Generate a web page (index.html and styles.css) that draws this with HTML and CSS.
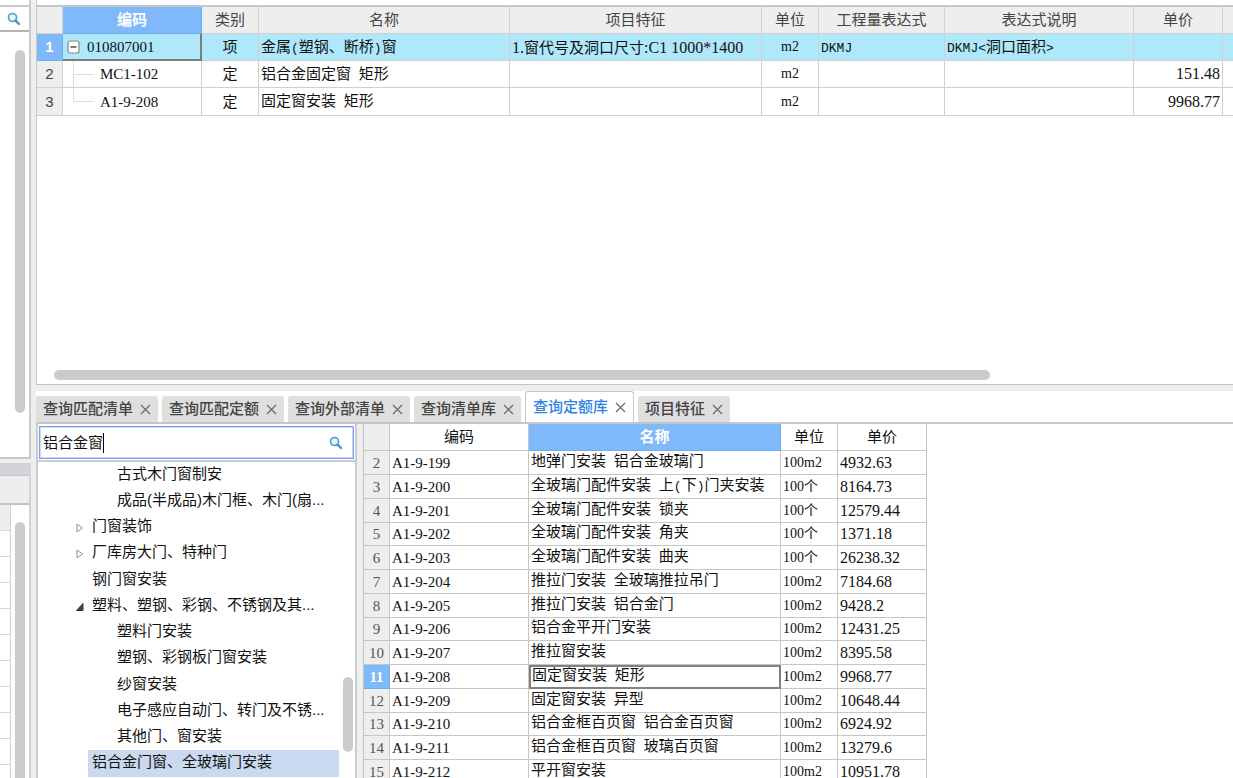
FILE: index.html
```html
<!DOCTYPE html>
<html lang="zh-CN">
<head>
<meta charset="utf-8">
<title>查询定额库</title>
<link rel="stylesheet" href="styles.css">
</head>
<body>
<div class="app">
  <aside class="side">
    <section class="side-top">
      <button class="side-search" aria-label="搜索">
        <svg width="14" height="14" viewBox="0 0 14 14"><circle cx="5.5" cy="5.5" r="4" fill="#eef7fd" stroke="#4a9ccb" stroke-width="1.6"/><path d="M8.6 8.6L12 12" stroke="#3f94c6" stroke-width="2.4" stroke-linecap="round"/></svg>
      </button>
      <div class="side-body"><span class="thumb thumb-side"></span></div>
    </section>
    <section class="side-bottom">
      <div class="side-title"></div>
      <div class="side-tools"></div>
      <div class="side-grid">
        <div class="side-cells"><i></i><i></i><i></i><i></i><i></i><i></i><i></i><i></i><i></i><i></i><i></i></div>
        <span class="thumb thumb-low"></span>
      </div>
    </section>
  </aside>

  <main class="main">
    <section class="bill">
      <table class="bill-table">
        <colgroup><col class="w-no"><col class="w-code"><col class="w-kind"><col class="w-name"><col class="w-feature"><col class="w-kind"><col class="w-expr"><col class="w-desc"><col class="w-price"><col></colgroup>
        <thead>
          <tr><th></th><th class="picked">编码</th><th>类别</th><th>名称</th><th>项目特征</th><th>单位</th><th>工程量表达式</th><th>表达式说明</th><th>单价</th><th></th></tr>
        </thead>
        <tbody>
          <tr class="current">
            <th class="picked">1</th>
            <td class="code cell-focus"><div class="node"><button class="toggle" aria-label="折叠"><svg width="13" height="14" viewBox="0 0 13 14"><rect x="1" y="1" width="11" height="12" rx="2" fill="#fff" stroke="#858585" stroke-width="1.2"/><path d="M3.5 7H9.500" stroke="#444" stroke-width="1.4"/></svg></button><span>010807001</span></div></td>
            <td class="mid">项</td>
            <td class="mix"><span>金属</span>(<span>塑钢、断桥</span>)<span>窗</span></td>
            <td class="feature"><b>1.</b>窗代号及洞口尺寸<b>:C1 1000*1400</b></td>
            <td class="unit mid">m2</td>
            <td class="mix">DKMJ</td>
            <td class="mix">DKMJ&lt;<span>洞口面积</span>&gt;</td>
            <td></td><td></td>
          </tr>
          <tr>
            <th>2</th>
            <td class="code"><div class="node"><svg class="branch" width="22" height="27" viewBox="0 0 22 27"><path d="M.5 0V27M.5 13.500H21" fill="none" stroke="#dcdcdc"/></svg><span>MC1-102</span></div></td>
            <td class="mid">定</td>
            <td class="mix"><span>铝合金固定窗</span> <span>矩形</span></td>
            <td></td><td class="unit mid">m2</td><td></td><td></td><td class="price right">151.48</td><td></td>
          </tr>
          <tr>
            <th>3</th>
            <td class="code"><div class="node"><svg class="branch" width="22" height="27" viewBox="0 0 22 27"><path d="M.5 0V13.500H21" fill="none" stroke="#dcdcdc"/></svg><span>A1-9-208</span></div></td>
            <td class="mid">定</td>
            <td class="mix"><span>固定窗安装</span> <span>矩形</span></td>
            <td></td><td class="unit mid">m2</td><td></td><td></td><td class="price right">9968.77</td><td></td>
          </tr>
        </tbody>
      </table>
      <span class="thumb thumb-wide"></span>
    </section>

    <section class="lookup">
      <nav class="tabs">
        <div class="tab"><button>查询匹配清单</button><button class="close" aria-label="关闭"><svg width="11" height="11" viewBox="0 0 11 11"><path d="M1 1L10 10M10 1L1 10"/></svg></button></div>
        <div class="tab"><button>查询匹配定额</button><button class="close" aria-label="关闭"><svg width="11" height="11" viewBox="0 0 11 11"><path d="M1 1L10 10M10 1L1 10"/></svg></button></div>
        <div class="tab"><button>查询外部清单</button><button class="close" aria-label="关闭"><svg width="11" height="11" viewBox="0 0 11 11"><path d="M1 1L10 10M10 1L1 10"/></svg></button></div>
        <div class="tab"><button>查询清单库</button><button class="close" aria-label="关闭"><svg width="11" height="11" viewBox="0 0 11 11"><path d="M1 1L10 10M10 1L1 10"/></svg></button></div>
        <div class="tab active"><button>查询定额库</button><button class="close" aria-label="关闭"><svg width="11" height="11" viewBox="0 0 11 11"><path d="M1 1L10 10M10 1L1 10"/></svg></button></div>
        <div class="tab"><button>项目特征</button><button class="close" aria-label="关闭"><svg width="11" height="11" viewBox="0 0 11 11"><path d="M1 1L10 10M10 1L1 10"/></svg></button></div>
      </nav>
      <div class="panes">
        <div class="finder">
          <div class="search">
            <input type="text" value="铝合金窗" aria-label="搜索定额">
            <span class="caret"></span>
            <svg width="14" height="14" viewBox="0 0 14 14"><circle cx="5.500" cy="5.500" r="4" fill="#eef7fd" stroke="#4a9ccb" stroke-width="1.6"/><path d="M8.600 8.600L12 12" stroke="#3f94c6" stroke-width="2.4" stroke-linecap="round"/></svg>
          </div>
          <div class="tree-box">
            <ul class="tree">
              <li class="deep">古式木门窗制安</li>
              <li class="deep">成品(半成品)木门框、木门(扇...</li>
              <li><svg width="8" height="10" viewBox="0 0 8 10"><path d="M1 1L6.500 5L1 9Z" fill="#fff" stroke="#909090"/></svg>门窗装饰</li>
              <li><svg width="8" height="10" viewBox="0 0 8 10"><path d="M1 1L6.500 5L1 9Z" fill="#fff" stroke="#909090"/></svg>厂库房大门、特种门</li>
              <li>钢门窗安装</li>
              <li><svg width="8" height="10" viewBox="0 0 8 10"><path d="M7 1.500V8.500H0.500Z" fill="#444" stroke="#333"/></svg>塑料、塑钢、彩钢、不锈钢及其...</li>
              <li class="deep">塑料门安装</li>
              <li class="deep">塑钢、彩钢板门窗安装</li>
              <li class="deep">纱窗安装</li>
              <li class="deep">电子感应自动门、转门及不锈...</li>
              <li class="deep">其他门、窗安装</li>
              <li class="chosen">铝合金门窗、全玻璃门安装</li>
            </ul>
            <span class="thumb thumb-tree"></span>
          </div>
        </div>
        <div class="results">
          <table class="quota">
            <colgroup><col class="w-no"><col class="w-code"><col class="w-title"><col class="w-kind"><col class="w-price"></colgroup>
            <thead><tr><th class="corner"></th><th>编码</th><th class="picked">名称</th><th>单位</th><th>单价</th></tr></thead>
            <tbody>
              <tr><th>2</th><td class="code">A1-9-199</td><td class="mix"><span>地弹门安装</span> <span>铝合金玻璃门</span></td><td class="unit">100m2</td><td class="price">4932.63</td></tr>
              <tr><th>3</th><td class="code">A1-9-200</td><td class="mix"><span>全玻璃门配件安装</span> <span>上</span>(<span>下</span>)<span>门夹安装</span></td><td class="unit">100个</td><td class="price">8164.73</td></tr>
              <tr><th>4</th><td class="code">A1-9-201</td><td class="mix"><span>全玻璃门配件安装</span> <span>锁夹</span></td><td class="unit">100个</td><td class="price">12579.44</td></tr>
              <tr><th>5</th><td class="code">A1-9-202</td><td class="mix"><span>全玻璃门配件安装</span> <span>角夹</span></td><td class="unit">100个</td><td class="price">1371.18</td></tr>
              <tr><th>6</th><td class="code">A1-9-203</td><td class="mix"><span>全玻璃门配件安装</span> <span>曲夹</span></td><td class="unit">100个</td><td class="price">26238.32</td></tr>
              <tr><th>7</th><td class="code">A1-9-204</td><td class="mix"><span>推拉门安装</span> <span>全玻璃推拉吊门</span></td><td class="unit">100m2</td><td class="price">7184.68</td></tr>
              <tr><th>8</th><td class="code">A1-9-205</td><td class="mix"><span>推拉门安装</span> <span>铝合金门</span></td><td class="unit">100m2</td><td class="price">9428.2</td></tr>
              <tr><th>9</th><td class="code">A1-9-206</td><td class="mix"><span>铝合金平开门安装</span></td><td class="unit">100m2</td><td class="price">12431.25</td></tr>
              <tr><th>10</th><td class="code">A1-9-207</td><td class="mix"><span>推拉窗安装</span></td><td class="unit">100m2</td><td class="price">8395.58</td></tr>
              <tr><th class="picked">11</th><td class="code">A1-9-208</td><td class="mix cell-box"><span>固定窗安装</span> <span>矩形</span></td><td class="unit">100m2</td><td class="price">9968.77</td></tr>
              <tr><th>12</th><td class="code">A1-9-209</td><td class="mix"><span>固定窗安装</span> <span>异型</span></td><td class="unit">100m2</td><td class="price">10648.44</td></tr>
              <tr><th>13</th><td class="code">A1-9-210</td><td class="mix"><span>铝合金框百页窗</span> <span>铝合金百页窗</span></td><td class="unit">100m2</td><td class="price">6924.92</td></tr>
              <tr><th>14</th><td class="code">A1-9-211</td><td class="mix"><span>铝合金框百页窗</span> <span>玻璃百页窗</span></td><td class="unit">100m2</td><td class="price">13279.6</td></tr>
              <tr><th>15</th><td class="code">A1-9-212</td><td class="mix"><span>平开窗安装</span></td><td class="unit">100m2</td><td class="price">10951.78</td></tr>
            </tbody>
          </table>
        </div>
      </div>
    </section>
  </main>
</div>
</body>
</html>
```
FILE: styles.css
```css
* { box-sizing: border-box; }

body {
  margin: 0;
  background: #eeeeee;
  color: #111;
  font: 15px/20px "Liberation Sans", "Noto Sans CJK SC", sans-serif;
}

button {
  margin: 0;
  padding: 0;
  border: 0;
  background: none;
  color: inherit;
  font: inherit;
}

svg { display: block; flex: none; }

.app {
  display: grid;
  grid-template-columns: 31px minmax(0, 1fr);
  grid-template-rows: minmax(0, 1fr);
  column-gap: 5px;
  height: 100vh;
  overflow: hidden;
}

.thumb {
  position: absolute;
  background: #cbcbcb;
  border-radius: 5px;
}

/* left strip */
.side {
  display: grid;
  grid-template-rows: minmax(0, 459fr) minmax(0, 315fr);
  row-gap: 4px;
}

.side-top {
  display: flex;
  flex-direction: column;
  background: #fff;
  border-right: 2px solid #cbcbcf;
  border-bottom: 2px solid #c8c8c8;
}

.side-search {
  display: flex;
  align-items: center;
  height: 27px;
  margin-top: 5px;
  padding-left: 7px;
  border-top: 2px solid #c6cace;
  border-bottom: 2px solid #b4b4b4;
}

.side-body { position: relative; flex: 1; }
.thumb-side { left: 15px; top: 18px; bottom: 44px; width: 10px; }

.side-bottom {
  display: flex;
  flex-direction: column;
  border-right: 2px solid #d3d3d6;
}

.side-title { height: 13px; background: #d3d4db; border-bottom: 1px solid #c4c5cc; }
.side-tools { height: 29px; border-bottom: 2px solid #c2c2c2; }

.side-grid { position: relative; flex: 1; min-height: 0; overflow: hidden; background: #fff; }
.side-cells { display: grid; width: 11px; border-right: 1px solid #d2d2d2; }
.side-cells i { height: 26px; border-bottom: 1px solid #d6d6d6; }
.side-cells i:first-child { background: #eee; }
.thumb-low { left: 15px; top: 17px; bottom: -10px; width: 10px; }

/* right area */
.main {
  display: grid;
  grid-template-rows: minmax(0, 385fr) minmax(0, 387fr);
  row-gap: 6px;
  min-width: 0;
}

.bill {
  position: relative;
  padding-top: 5px;
  overflow: hidden;
  background: #fff;
  border-left: 1px solid #c6c9cd;
  border-bottom: 1px solid #c4c4c4;
}

.thumb-wide { left: 17px; right: 243px; bottom: 4px; height: 10px; }

table {
  table-layout: fixed;
  border-collapse: separate;
  border-spacing: 0;
}

th, td {
  padding: 0 2px;
  overflow: hidden;
  border-right: 1px solid #d0d0d0;
  border-bottom: 1px solid #d0d0d0;
  text-align: left;
  font-weight: normal;
  white-space: nowrap;
}

th { text-align: center; }

.w-no { width: 26px; }
.w-code { width: 139px; }
.w-kind { width: 57px; }
.w-name { width: 251px; }
.w-feature, .w-title { width: 252px; }
.w-expr { width: 126px; }
.w-desc { width: 189px; }
.w-price { width: 89px; }

.bill-table { width: 100%; border-top: 2px solid #c4c8cc; }
.bill-table thead tr { height: 27px; }
.bill-table tbody tr { height: 27px; }
.bill-table tbody tr:last-child { height: 28px; }
.bill-table th { background: #eeeeee; color: #444; }
.bill-table th:last-child, .bill-table td:last-child { border-right: 0; }
.bill-table .mix { padding-top: 3px; }
.current td { background: #aee8fa; }
.bill-table .picked, .quota .picked {
  background: #80b9f9;
  border-color: #6faeef;
  color: #fff;
  font-weight: bold;
}

.cell-focus { border-right: 2px solid #7c7c7c; border-bottom: 2px solid #7c7c7c; }
.cell-box { border: 2px solid #808080; padding: 0 1px; }

.code, .price, .unit { font-family: "Liberation Serif", "Noto Sans CJK SC", serif; }
.code { font-size: 15px; }
.price { font-size: 16px; }
.unit { font-size: 14px; }

.mix { font-family: "Liberation Mono", "Noto Sans CJK SC", monospace; font-size: 13px; }
.mix span { font-size: 15px; }
.feature { font-family: "Noto Sans CJK SC", sans-serif; }
.feature b { font: 16px/20px "Liberation Serif", serif; }

.mid { text-align: center; }
.right { text-align: right; }

.node { display: flex; align-items: center; gap: 5px; padding-left: 8px; }
.current .node { gap: 7px; padding-left: 2px; }
.node span { line-height: 20px; }
.branch { margin: -1px 0; }

/* lookup panel */
.lookup {
  display: flex;
  flex-direction: column;
  min-height: 0;
  background: #fff;
}

.tabs {
  display: flex;
  align-items: flex-end;
  gap: 4px;
  height: 33px;
  border-bottom: 2px solid #c4c7ca;
}

.tab {
  display: flex;
  align-items: center;
  gap: 7px;
  height: 26px;
  padding: 0 7px;
  border-radius: 3px 3px 0 0;
  background: #dfdfdf;
  color: #444;
  font-weight: 500;
}

.tab.active {
  height: 31px;
  border: 1px solid #c4c8cc;
  border-bottom: 0;
  background: #fff;
  color: #2c83e6;
}

.close svg { stroke: #707070; stroke-width: 1.4; }

.panes {
  display: grid;
  grid-template-columns: 321px minmax(0, 1fr);
  grid-template-rows: minmax(0, 1fr);
  column-gap: 6px;
  flex: 1;
  min-height: 0;
  background: #eee;
}

.finder {
  display: flex;
  flex-direction: column;
  min-height: 0;
  border: 2px solid #c8cdd2;
  border-top: 0;
  border-bottom: 0;
  background: #fff;
}

.search {
  position: relative;
  display: flex;
  flex: none;
  align-items: center;
  height: 33px;
  margin: 2px 1px 1px;
  padding-right: 10px;
  border: 1px solid #7f9fe6;
  outline: 1px solid #c9d6f5;
  outline-offset: -2px;
}

.search input {
  flex: 1;
  min-width: 0;
  padding: 0 3px;
  border: 0;
  outline: 0;
  background: none;
  color: #111;
  font: inherit;
}

.caret { position: absolute; left: 63px; top: 6px; width: 1px; height: 20px; background: #000; }

.tree-box {
  position: relative;
  flex: 1;
  min-height: 0;
  overflow: hidden;
  border-top: 2px solid #c8cdd2;
}

.tree { margin: 0; padding: 0 16px 0 50px; list-style: none; }
.tree li {
  position: relative;
  height: 26px;
  padding-left: 4px;
  line-height: 24px;
  white-space: nowrap;
}
.tree li:nth-child(4n) { height: 27px; }
.tree li.deep { padding-left: 29px; }
.tree li svg { position: absolute; left: -12px; top: 9px; }
.tree .chosen { background: #cad9f0; }
.thumb-tree { right: 2px; bottom: 26px; width: 10px; height: 75px; }

.results { overflow: hidden; background: #fff; border-left: 1px solid #c4c4c4; }
.quota { width: 563px; }
.quota th, .quota td { border-color: #c6c6c6; }
.quota thead tr { height: 27px; }
.quota tbody tr { height: 24px; }
.quota tbody tr:nth-child(4n) { height: 23px; }
.quota tbody td { line-height: 20px; }
.quota tbody th {
  background: #eee;
  color: #555;
  font-family: "Liberation Serif", serif;
}
.quota .corner { background: #eee; }
.quota td.cell-box { border-color: #808080; }
```
